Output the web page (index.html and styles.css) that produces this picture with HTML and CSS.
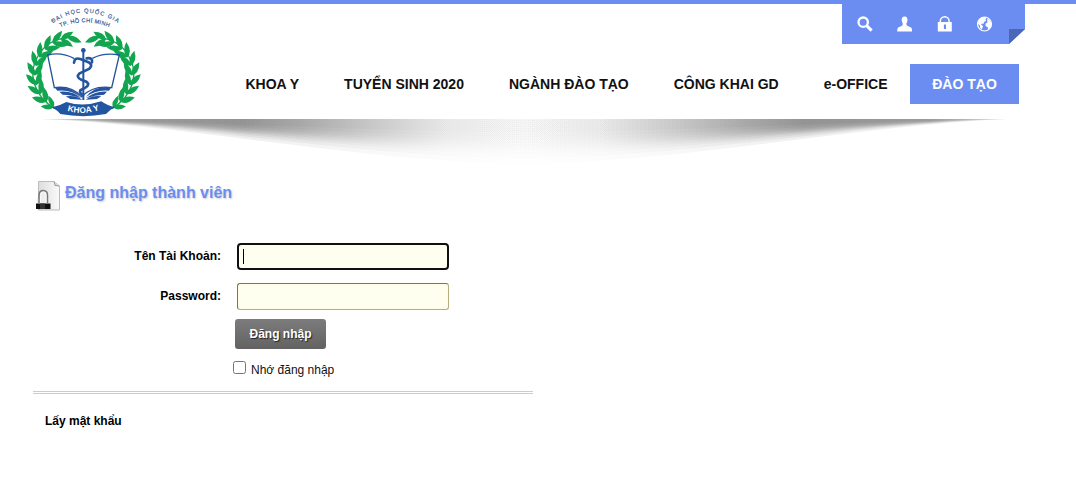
FILE: index.html
```html
<!DOCTYPE html>
<html lang="vi">
<head>
<meta charset="utf-8">
<title>Khoa Y - Đăng nhập thành viên</title>
<link rel="stylesheet" href="styles.css">
</head>
<body>
<header class="header">
  <a class="logo" href="#">
    <svg width="130" height="121" viewBox="0 12 390 363">
      <defs>
        <path id="arc1" d="M98 70 Q190 6 292 68"/>
        <path id="arc2" d="M121 82 Q190 52 268 82"/>
        <path id="arc3" d="M142 332 Q188 347 242 329"/>
        <path id="leaf" d="M-5 0 Q10 -21 42 -5 Q20 12 -5 0Z"/>
        <g id="pair"><use href="#leaf" transform="rotate(-24)"/><use href="#leaf" transform="rotate(30) scale(1 -1)"/></g>
        <g id="branch">
          <path class="stem" d="M104 326 C40 285 22 220 54 168 Q82 118 145 113"/>
          <use href="#pair" transform="translate(98 320) rotate(-148) scale(.85)"/>
          <use href="#pair" transform="translate(77 302) rotate(-136)"/>
          <use href="#pair" transform="translate(60 278) rotate(-121)"/>
          <use href="#pair" transform="translate(49 251) rotate(-107)"/>
          <use href="#pair" transform="translate(45 222) rotate(-92)"/>
          <use href="#pair" transform="translate(49 193) rotate(-76)"/>
          <use href="#pair" transform="translate(60 168) rotate(-58)"/>
          <use href="#pair" transform="translate(78 145) rotate(-41)"/>
          <use href="#pair" transform="translate(102 127) rotate(-24)"/>
          <use href="#pair" transform="translate(126 117) rotate(-2) scale(.95)"/>
          <use href="#leaf" transform="translate(145 113) rotate(26)"/>
        </g>
      </defs>
      <text class="arc-text"><textPath href="#arc1" textLength="208">ĐẠI HỌC QUỐC GIA</textPath></text>
      <text class="arc-text"><textPath href="#arc2" textLength="150">TP. HỒ CHÍ MINH</textPath></text>
      <g class="wreath"><use href="#branch"/><use href="#branch" transform="translate(380 0) scale(-1 1)"/></g>
      <g class="book">
        <path d="M163 176 Q125 155 83 165 L103 263 Q155 256 184 290 Q222 254 275 263 L298 165 Q252 157 217 175"/>
        <path class="page" d="M104 262 Q155 257 182 292 Q153 267 112 272ZM118 275 Q157 270 184 295 Q155 284 128 284ZM137 289 Q165 284 187 299 L151 297ZM274 262 Q224 255 198 291 Q227 268 267 272ZM261 275 Q226 272 198 295 Q226 285 252 284ZM244 289 Q218 285 197 299 L231 297Z"/>
      </g>
      <g class="staff">
        <circle class="knob" cx="190" cy="151" r="7"/>
        <path d="M190 155V300"/>
        <path class="snake" d="M162 188 Q164 171 181 177 L202 185 Q222 193 207 207 L179 220 Q166 231 184 239 L199 245 Q211 254 196 263 L181 271 Q177 278 189 286"/>
        <path class="snake" d="M200 175 Q219 172 216 187"/>
      </g>
      <path class="ribbon" d="M96 322 Q118 318 139 306 Q190 322 244 304 Q263 318 285 321 Q268 330 258 342 Q190 355 121 342 Q113 332 96 322Z"/>
      <text class="ribbon-text"><textPath href="#arc3" textLength="98">KHOA Y</textPath></text>
    </svg>
  </a>
  <div class="right">
    <div class="tools">
      <svg class="tool" viewBox="0 0 16 16"><circle cx="6.2" cy="6.2" r="4.7" fill="none" stroke="#fff" stroke-width="2.3"/><path d="M9.6 9.6l5 5" stroke="#fff" stroke-width="3"/></svg>
      <svg class="tool" viewBox="0 0 16 16"><path d="M7.5 .6C10 .6 10.7 2.4 10.4 4.7 10.2 6.3 9.4 7 9.4 8c0 2.200 2 2.400 3.700 3 1.700.7 2 1.700 2 4.500H.2c0-2.800.3-3.800 2-4.500 1.700-.6 3.600-.8 3.600-3 0-1-.8-1.700-1-3.300C4.500 2.400 5.100.6 7.500.6z"/></svg>
      <svg class="tool" viewBox="0 0 16 16"><path fill="none" stroke="#fff" stroke-width="1.500" d="M3.300 7V5.200a4.400 4.400 0 0 1 8.800 0V7"/><path fill-rule="evenodd" d="M.8 6h14v9.500H.8zM6.900 8.500h2.100V13H6.900z"/></svg>
      <svg class="tool" viewBox="0 0 16 16"><circle cx="7.500" cy="8" r="7" fill="none" stroke="#fff" stroke-width="1.200"/><path d="M1 8C1 4 4 1 8 1L9.500 2 8.500 3.500 9 5 7 6 6.500 8 5 7.500 4 8.500 6 10 5.500 12 4.500 13.500 3 11.500 3 9.500ZM10 3L12 3.500 14.500 7 14 11 11.500 13.500 10.500 11 8.500 10 8.500 7.500 10.500 6.500Z"/></svg>
    </div>
    <nav class="nav">
      <a href="#">KHOA Y</a><a href="#">TUYỂN SINH 2020</a><a href="#">NGÀNH ĐÀO TẠO</a><a href="#">CÔNG KHAI GD</a><a href="#">e-OFFICE</a><a class="active" href="#">ĐÀO TẠO</a>
    </nav>
  </div>
</header>
<svg class="shadow" viewBox="0 0 968 52" preserveAspectRatio="none">
  <defs>
    <linearGradient id="fade">
      <stop offset="0" stop-color="#555" stop-opacity=".02"/>
      <stop offset=".08" stop-color="#555" stop-opacity=".085"/>
      <stop offset=".21" stop-color="#555" stop-opacity=".095"/>
      <stop offset=".27" stop-color="#666" stop-opacity=".08"/>
      <stop offset=".34" stop-color="#777" stop-opacity=".052"/>
      <stop offset=".42" stop-color="#888" stop-opacity=".022"/>
      <stop offset=".5" stop-color="#999" stop-opacity=".012"/>
      <stop offset=".58" stop-color="#888" stop-opacity=".022"/>
      <stop offset=".66" stop-color="#777" stop-opacity=".052"/>
      <stop offset=".73" stop-color="#666" stop-opacity=".08"/>
      <stop offset=".79" stop-color="#555" stop-opacity=".095"/>
      <stop offset=".92" stop-color="#555" stop-opacity=".085"/>
      <stop offset="1" stop-color="#555" stop-opacity=".02"/>
    </linearGradient>
    <path id="sweep" d="M0 0C160 5 330 32 484 32S808 5 968 0Z"/>
  </defs>
  <g fill="url(#fade)">
    <use href="#sweep" transform="scale(1 .4)"/><use href="#sweep" transform="scale(1 .55)"/>
    <use href="#sweep" transform="scale(1 .66)"/><use href="#sweep" transform="scale(1 .75)"/>
    <use href="#sweep" transform="scale(1 .83)"/><use href="#sweep" transform="scale(1 .91)"/>
    <use href="#sweep" transform="scale(1 .99)"/><use href="#sweep" transform="scale(1 1.09)"/>
    <use href="#sweep" transform="scale(1 1.22)"/><use href="#sweep" transform="scale(1 1.38)"/>
  </g>
</svg>
<main class="content">
  <h1 class="title">
    <svg width="26" height="30" viewBox="0 0 26 30">
      <defs><linearGradient id="paper"><stop offset="0" stop-color="#ddd"/><stop offset="1" stop-color="#fafafa"/></linearGradient></defs>
      <path d="M2.500 .5H18L23.500 5V29H2.500Z" fill="url(#paper)" stroke="#bbb"/>
      <path d="M18 .5L19 4.500 23.500 5" fill="#ddd" stroke="#999"/>
      <rect x="1" y="17" width="13" height="6" fill="#eee"/>
      <path d="M3 22V14.500Q3 9.500 7.300 9.500T11.500 14.500V22" fill="none" stroke="#777" stroke-width="1.500"/>
      <path d="M4.500 22V14.500Q4.500 11 7.300 11T10 14.500V22" fill="#eee" stroke="#fff" stroke-width=".7"/>
      <rect y="22.500" width="14.500" height="5.500" fill="#111"/><path d="M4 22.500h5v5.500H4z" fill="#333"/>
    </svg>
    <span>Đăng nhập thành viên</span>
  </h1>
  <form class="form">
    <label class="label">Tên Tài Khoản:</label><div class="field focused"><span class="caret"></span></div>
    <label class="label">Password:</label><div class="field"></div>
    <button class="submit" type="button">Đăng nhập</button>
    <label class="remember"><input type="checkbox">Nhớ đăng nhập</label>
  </form>
  <div class="rule"></div>
  <a class="recover" href="#">Lấy mật khẩu</a>
</main>
</body>
</html>
```
FILE: styles.css
```css
* { box-sizing: border-box; }
body { margin: 0; background: #fff; color: #111; font: 12px/16px "Liberation Sans", Arial, sans-serif; overflow: hidden; }
a { color: inherit; text-decoration: none; }
.header { height: 119px; border-top: 4px solid #6b8df2; display: flex; }
.logo { width: 130px; height: 121px; margin-left: 20px; flex: none; z-index: 1; }
.logo svg { display: block; }
.arc-text { font-size: 17px; fill: #31569b; stroke: #31569b; stroke-width: .5; }
.wreath { fill: #12a54f; }
.stem { fill: none; stroke: #12a54f; stroke-width: 4; }
.book { fill: none; stroke: #2454a0; stroke-width: 4; }
.book .page { fill: #2454a0; stroke: none; }
.staff { fill: none; stroke: #2454a0; stroke-width: 6; }
.staff .knob { fill: #2454a0; stroke: none; }
.staff .snake { stroke-width: 8; stroke-linecap: round; }
.ribbon { fill: #2154a1; }
.ribbon-text { fill: #fff; font-size: 25px; font-weight: bold; }
.right { width: 875px; display: flex; flex-direction: column; align-items: flex-end; }
.tools { width: 183px; height: 40px; padding: 12px 0 0 15px; background: #6b8df2; display: flex; gap: 24px; clip-path: polygon(0 0, 100% 0, 100% 25px, 167px 100%, 0 100%); background-image: linear-gradient(#4b67b5, #4b67b5); background-size: 16px 15px; background-position: right bottom; background-repeat: no-repeat; }
.tool { width: 16px; height: 16px; fill: #fff; flex: none; }
.nav { display: flex; margin: 20px 6px 0 0; font-size: 14px; font-weight: bold; line-height: 40px; white-space: nowrap; }
.nav a { padding: 0 22.500px; }
.nav .active { width: 109px; padding: 0; text-align: center; color: #fff; background: #6b8df2; }
.shadow { display: block; width: 968px; height: 52px; margin-left: 40px; }
.content { padding: 10px 0 0 33px; }
.title { display: flex; margin: 0; padding-left: 3px; gap: 3px; height: 30px; font-size: 16px; line-height: 24px; color: #6b8df2; text-shadow: 1px 1px 2px #ccc; }
.form { display: grid; grid-template-columns: 188px 212px; column-gap: 16px; margin-top: 32px; }
.label { height: 40px; padding-top: 5px; text-align: right; font-weight: bold; color: #000; }
.field { height: 27px; border: 1px solid; border-color: #7c755a #b8ae83 #b8ae83 #7c755a; border-radius: 3px; background: #fffff0; box-shadow: inset 0 0 4px #fffbd8; }
.field.focused { border: 2px solid #101010; border-radius: 4px; padding: 4px; box-shadow: none; }
.caret { display: block; width: 1px; height: 15px; background: #000; }
.submit { grid-column: 2; width: 91px; height: 30px; margin: -4px 0 0 -2px; padding: 0; border: 0; border-radius: 3px; background: linear-gradient(#7c7c7c, #626262); color: #fff; font: bold 12px "Liberation Sans", Arial, sans-serif; text-shadow: 1px 1px 1px #222; }
.remember { grid-column: 2; display: flex; height: 18px; margin: 12px 0 0 -4px; line-height: 18px; }
.remember input { width: 13px; height: 13px; margin: 0 5px 0 0; }
.rule { width: 500px; height: 3px; margin-top: 12px; border: solid #ccc; border-width: 1px 0; }
.recover { display: inline-block; margin: 19px 0 0 12px; font-weight: bold; color: #000; }
```
